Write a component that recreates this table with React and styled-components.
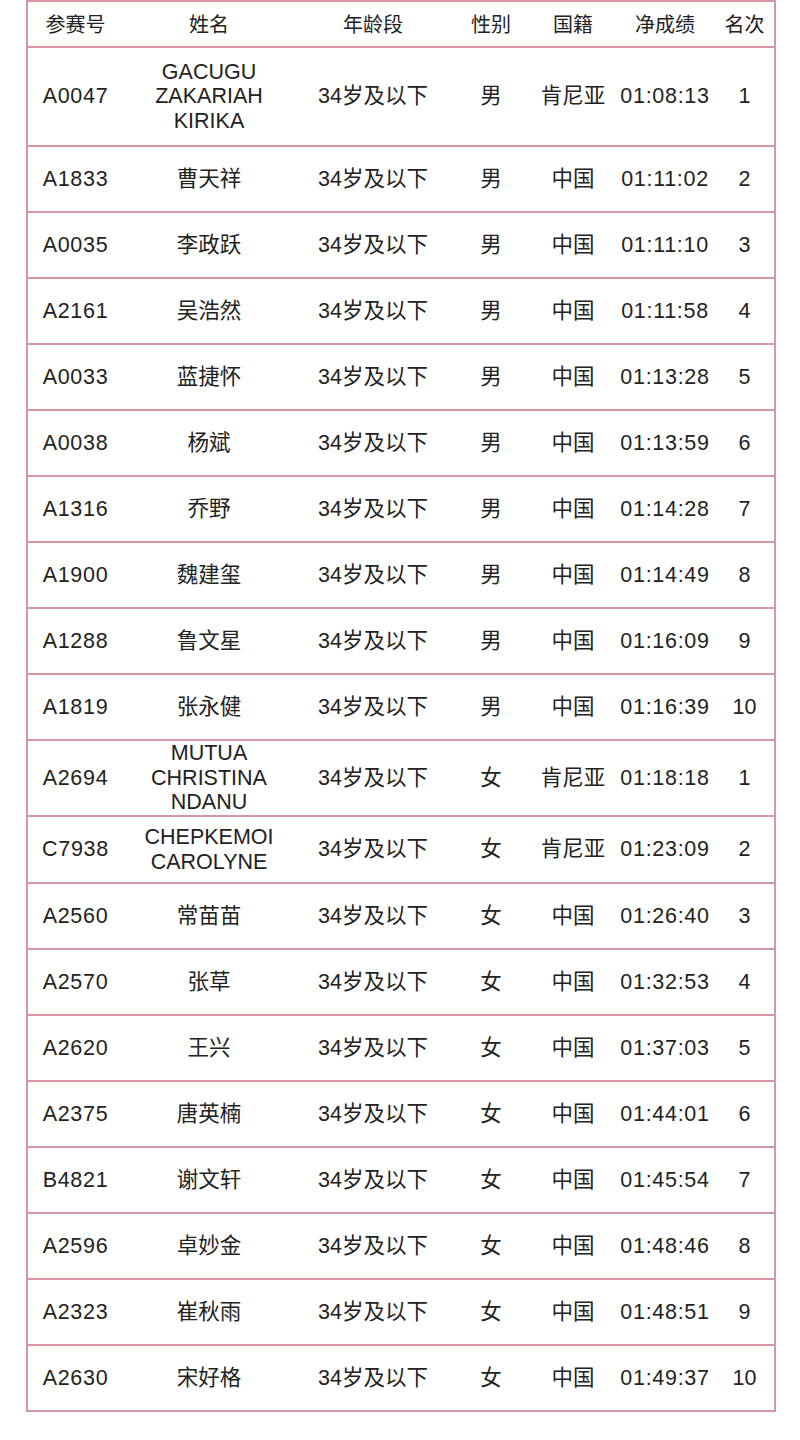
import React from "react";
import styled, { createGlobalStyle } from "styled-components";

const GlobalStyle = createGlobalStyle`
  html, body {
    margin: 0;
    padding: 0;
    background: #ffffff;
  }
  body {
    font-family: "Liberation Sans", "Noto Sans CJK SC", sans-serif;
    color: #222;
  }
`;

const Page = styled.div`
  width: 800px;
  padding: 0 26px 0 26px;
  box-sizing: border-box;
`;

const Table = styled.table`
  width: 748px;
  border-collapse: collapse;
  table-layout: fixed;
  border: 2px solid #d497a3;
`;

const Row = styled.tr`
  height: ${({ $h = 66 }) => $h}px;
  border-bottom: 2px solid #d497a3;
`;

const HeadCell = styled.th`
  font-weight: normal;
  font-size: 20px;
  color: #222;
  text-align: center;
  padding: 0 0 2px 0;
  vertical-align: middle;
`;

const Cell = styled.td`
  font-size: 21.5px;
  line-height: 24.5px;
  letter-spacing: ${({ $spaced }) => ($spaced ? "0.7px" : "0")};
  text-align: center;
  padding: 0;
  vertical-align: middle;
  color: #222;
  white-space: nowrap;
`;

const NameLine = styled.div`
  display: block;
`;

const columns = [
  { title: "参赛号", width: 96 },
  { title: "姓名", width: 172 },
  { title: "年龄段", width: 156 },
  { title: "性别", width: 80 },
  { title: "国籍", width: 84 },
  { title: "净成绩", width: 100 },
  { title: "名次", width: 60 },
];

const rows = [
  { id: "A0047", name: ["GACUGU", "ZAKARIAH", "KIRIKA"], sex: "男", nation: "肯尼亚", time: "01:08:13", rank: 1, h: 99 },
  { id: "A1833", name: ["曹天祥"], sex: "男", nation: "中国", time: "01:11:02", rank: 2 },
  { id: "A0035", name: ["李政跃"], sex: "男", nation: "中国", time: "01:11:10", rank: 3 },
  { id: "A2161", name: ["吴浩然"], sex: "男", nation: "中国", time: "01:11:58", rank: 4 },
  { id: "A0033", name: ["蓝捷怀"], sex: "男", nation: "中国", time: "01:13:28", rank: 5 },
  { id: "A0038", name: ["杨斌"], sex: "男", nation: "中国", time: "01:13:59", rank: 6 },
  { id: "A1316", name: ["乔野"], sex: "男", nation: "中国", time: "01:14:28", rank: 7 },
  { id: "A1900", name: ["魏建玺"], sex: "男", nation: "中国", time: "01:14:49", rank: 8 },
  { id: "A1288", name: ["鲁文星"], sex: "男", nation: "中国", time: "01:16:09", rank: 9 },
  { id: "A1819", name: ["张永健"], sex: "男", nation: "中国", time: "01:16:39", rank: 10 },
  { id: "A2694", name: ["MUTUA", "CHRISTINA", "NDANU"], sex: "女", nation: "肯尼亚", time: "01:18:18", rank: 1, h: 76 },
  { id: "C7938", name: ["CHEPKEMOI", "CAROLYNE"], sex: "女", nation: "肯尼亚", time: "01:23:09", rank: 2, h: 67 },
  { id: "A2560", name: ["常苗苗"], sex: "女", nation: "中国", time: "01:26:40", rank: 3 },
  { id: "A2570", name: ["张草"], sex: "女", nation: "中国", time: "01:32:53", rank: 4 },
  { id: "A2620", name: ["王兴"], sex: "女", nation: "中国", time: "01:37:03", rank: 5 },
  { id: "A2375", name: ["唐英楠"], sex: "女", nation: "中国", time: "01:44:01", rank: 6 },
  { id: "B4821", name: ["谢文轩"], sex: "女", nation: "中国", time: "01:45:54", rank: 7 },
  { id: "A2596", name: ["卓妙金"], sex: "女", nation: "中国", time: "01:48:46", rank: 8 },
  { id: "A2323", name: ["崔秋雨"], sex: "女", nation: "中国", time: "01:48:51", rank: 9 },
  { id: "A2630", name: ["宋好格"], sex: "女", nation: "中国", time: "01:49:37", rank: 10 },
];

export default function App() {
  return (
    <Page>
      <GlobalStyle />
      <Table>
        <colgroup>
          {columns.map((c) => (
            <col key={c.title} style={{ width: c.width }} />
          ))}
        </colgroup>
        <thead>
          <Row $h={46}>
            {columns.map((c) => (
              <HeadCell key={c.title}>{c.title}</HeadCell>
            ))}
          </Row>
        </thead>
        <tbody>
          {rows.map((r) => (
            <Row key={r.id} $h={r.h}>
              <Cell $spaced>{r.id}</Cell>
              <Cell>
                {r.name.map((n, i) => (
                  <NameLine key={i}>{n}</NameLine>
                ))}
              </Cell>
              <Cell>34岁及以下</Cell>
              <Cell>{r.sex}</Cell>
              <Cell>{r.nation}</Cell>
              <Cell $spaced>{r.time}</Cell>
              <Cell>{r.rank}</Cell>
            </Row>
          ))}
        </tbody>
      </Table>
    </Page>
  );
}
